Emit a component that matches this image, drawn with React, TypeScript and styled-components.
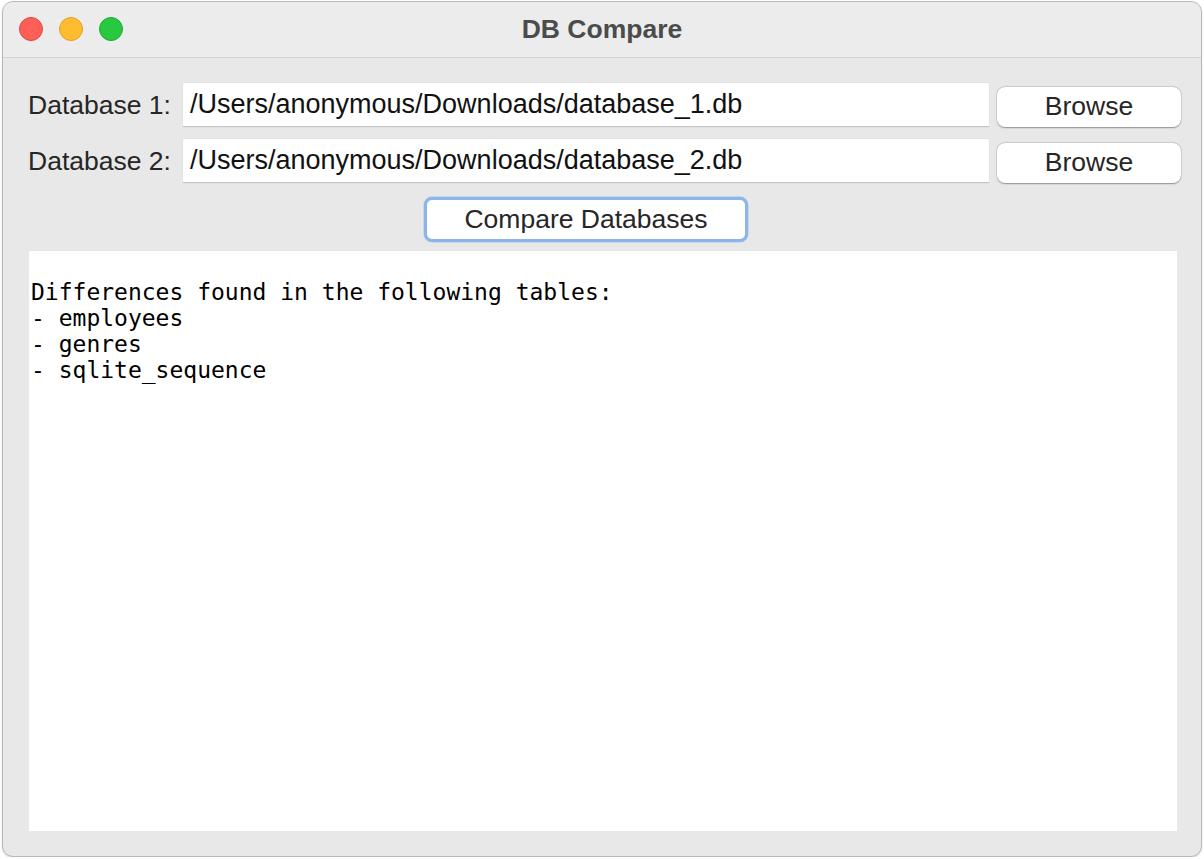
import React from "react";
import styled, { createGlobalStyle } from "styled-components";

const Global = createGlobalStyle`
  html, body { margin: 0; padding: 0; background: #ffffff; }
  body { font-family: "Liberation Sans", Arial, sans-serif; }
`;

const Window = styled.div`
  box-sizing: border-box;
  margin: 1px 0 0 2px;
  width: 1200px;
  height: 856px;
  border: 1px solid #b9b9b9;
  border-radius: 11px;
  background: #e8e8e8;
  overflow: hidden;
  display: flex;
  flex-direction: column;
  box-shadow: 0 1px 2px rgba(0, 0, 0, 0.15);
`;

const TitleBar = styled.div`
  position: relative;
  height: 55px;
  flex: none;
  background: #ececec;
  border-bottom: 1px solid #d2d2d2;
  display: flex;
  align-items: center;
  justify-content: center;
`;

const Lights = styled.div`
  position: absolute;
  left: 16px;
  top: 15px;
  display: flex;
  gap: 16px;
`;

const Light = styled.span<{ $c: string; $b: string }>`
  width: 24px;
  height: 24px;
  border-radius: 50%;
  box-sizing: border-box;
  background: ${(p) => p.$c};
  border: 1px solid ${(p) => p.$b};
`;

const Title = styled.div`
  font-weight: bold;
  font-size: 26.5px;
  color: #4b4b4b;
  margin-top: -1px;
`;

const Body = styled.div`
  flex: 1;
  display: flex;
  flex-direction: column;
  padding: 25px 20px 25px 25px;
`;

const Form = styled.div`
  display: grid;
  grid-template-columns: 155px 806px 192px;
  row-gap: 12px;
`;

const Label = styled.div`
  font-size: 26.5px;
  color: #262626;
  height: 43px;
  line-height: 45px;
  white-space: nowrap;
`;

const Entry = styled.div`
  box-sizing: border-box;
  height: 44px;
  background: #ffffff;
  border-bottom: 1px solid #c4c4c4;
  box-shadow: 0 0 0 0.5px #dcdcdc;
  font-size: 27px;
  color: #111111;
  padding-left: 7px;
  line-height: 43px;
  white-space: nowrap;
  overflow: hidden;
`;

const BtnCell = styled.div`
  padding: 4px 0 0 8px;
`;

const Button = styled.div<{ $focus?: boolean }>`
  box-sizing: border-box;
  background: #ffffff;
  border-radius: 8px;
  font-size: 26.5px;
  color: #262626;
  text-align: center;
  height: ${(p) => (p.$focus ? "45px" : "40px")};
  line-height: ${(p) => (p.$focus ? "39px" : "39px")};
  border: ${(p) => (p.$focus ? "3px solid #8db5ea" : "none")};
  box-shadow: ${(p) =>
    p.$focus
      ? "0 0 0 0.5px #a9c6ef"
      : "0 0.5px 1.5px rgba(0,0,0,0.35), 0 0 0 0.5px rgba(0,0,0,0.1)"};
`;

const CompareRow = styled.div`
  grid-column: 2;
  display: flex;
  justify-content: center;
  margin-top: 2px;
`;

const CompareButton = styled(Button)`
  width: 324px;
`;

const Output = styled.pre`
  flex: 1;
  margin: 9px 0 0 1px;
  width: 1148px;
  background: #ffffff;
  font-family: "DejaVu Sans Mono", "Liberation Mono", monospace;
  font-size: 23px;
  line-height: 26px;
  color: #000000;
  padding: 2px 2px;
  box-sizing: border-box;
`;

const output = `
Differences found in the following tables:
- employees
- genres
- sqlite_sequence`;

export default function App() {
  return (
    <>
      <Global />
      <Window>
        <TitleBar>
          <Lights>
            <Light $c="#fe5f57" $b="#e2463f" />
            <Light $c="#febc2e" $b="#e1a126" />
            <Light $c="#28c840" $b="#1eab32" />
          </Lights>
          <Title>DB Compare</Title>
        </TitleBar>
        <Body>
          <Form>
            <Label>Database 1:</Label>
            <Entry>/Users/anonymous/Downloads/database_1.db</Entry>
            <BtnCell>
              <Button>Browse</Button>
            </BtnCell>
            <Label>Database 2:</Label>
            <Entry>/Users/anonymous/Downloads/database_2.db</Entry>
            <BtnCell>
              <Button>Browse</Button>
            </BtnCell>
            <CompareRow>
              <CompareButton $focus>Compare Databases</CompareButton>
            </CompareRow>
          </Form>
          <Output>{output}</Output>
        </Body>
      </Window>
    </>
  );
}
